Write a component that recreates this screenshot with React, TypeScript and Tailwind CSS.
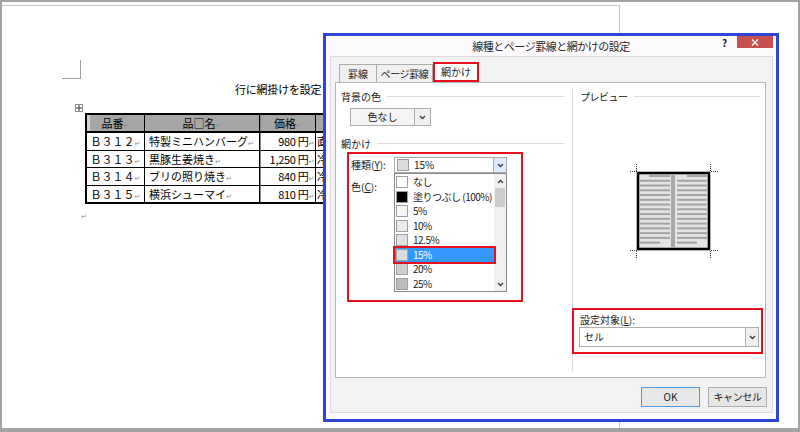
import React from 'react'

const shades = [
  { label: 'なし', swatch: 'bg-white' },
  { label: '塗りつぶし (100%)', swatch: 'bg-black' },
  { label: '5%', swatch: 'bg-[#f7f6f7]' },
  { label: '10%', swatch: 'bg-[#ebebeb]' },
  { label: '12.5%', swatch: 'bg-[#e2e2e2]' },
  { label: '15%', swatch: 'bg-[#dcdcdc]', selected: true },
  { label: '20%', swatch: 'bg-[#cfcfcf]' },
  { label: '25%', swatch: 'bg-[#bcbcbc]' },
]

const items = [
  { no: 'Ｂ３１２', name: '特製ミニハンバーグ', price: '980 円', kind: '直', h: 'h-[17px]' },
  { no: 'Ｂ３１３', name: '黒豚生姜焼き', price: '1,250 円', kind: '冷', h: 'h-[16px]' },
  { no: 'Ｂ３１４', name: 'ブリの照り焼き', price: '840 円', kind: '冷', h: 'h-[17px]' },
  { no: 'Ｂ３１５', name: '横浜シューマイ', price: '810 円', kind: '冷', h: 'h-[16px]' },
]

const previewRows = Array.from({ length: 15 }, (_, i) => 14 + i * 4.76)

function Chevron({ up = false }: { up?: boolean }) {
  return (
    <svg width="7" height="5" viewBox="0 0 7 5">
      <path d={up ? 'M1 4l2.5-2.5L6 4' : 'M1 1l2.5 2.5L6 1'} fill="none" stroke="#3a3a3a" strokeWidth="1.3" />
    </svg>
  )
}

function Mark() {
  return <span className="font-['DejaVu_Sans',sans-serif] text-[7px] text-[#8a8a8a]">↵</span>
}

function GroupLabel({ text, className = '' }: { text: string; className?: string }) {
  return (
    <div className={`flex items-center ${className}`}>
      <span className="whitespace-nowrap">{text}</span>
      <div className="ml-[6px] h-px flex-1 bg-[#dcdcdc]" />
    </div>
  )
}

function Preview() {
  return (
    <svg width="88" height="97" viewBox="0 0 88 97">
      <rect x="8" y="12" width="71" height="76" fill="#e4e4e4" stroke="#000" strokeWidth="2.6" />
      <rect x="41" y="13" width="4" height="74" fill="#a9a9a9" />
      {previewRows.map((y, i) => (
        <g key={i} fill="#a4a4a4">
          <rect x={i === 0 ? 19 : 10} y={y} width={i === 0 ? 21 : i === 14 ? 20 : 30} height="2" />
          <rect x={i === 0 ? 57 : 47} y={y} width={i === 0 ? 20 : i === 14 ? 20 : 30} height="2" />
        </g>
      ))}
      <g stroke="#333" strokeWidth="1" strokeDasharray="1 1" fill="none">
        <path d="M6.5 3v7M0 10.5h7" />
        <path d="M80.5 3v7M81 10.5h7" />
        <path d="M6.5 90v7M0 89.5h7" />
        <path d="M80.5 90v7M81 89.5h7" />
      </g>
    </svg>
  )
}

export default function App() {
  return (
    <div className="relative h-[432px] w-[800px] overflow-hidden border-t-2 border-l-2 border-r-2 border-b-4 border-[#a3a3a3] bg-white font-['Noto_Sans_CJK_JP',sans-serif] text-[#1a1a1a]">
      {/* document page */}
      <div className="pt-[3px]">
        <div className="h-[423px] w-[618px] border-t border-r border-[#c8c8c8]">
          <div className="ml-[60px] mt-[54px] h-[19px] w-[19px] border-r border-b border-[#a0a0a0]" />
          <div className="ml-[233px] mt-[2px] h-[16px] whitespace-nowrap text-[11px] leading-[16px] tracking-[-0.2px] text-black">
            行に網掛けを設定し
          </div>

          <div className="relative ml-[83px] mt-[16px] w-[243px]">
            <div className="absolute -left-[10px] -top-[9px] flex h-[8px] w-[8px] items-center justify-center border border-[#8c8c8c] bg-white">
              <svg width="6" height="6" viewBox="0 0 6 6">
                <path d="M3 0v6M0 3h6" stroke="#333" strokeWidth="1" />
              </svg>
            </div>
            <div className="border-2 border-black text-[11px] text-black">
              <div className="flex h-[18px] border-b-2 border-black bg-[#a6a6a6] leading-[16px]">
                <div className="w-[58px] border-r border-black text-center shadow-[inset_3px_0_0_#d3d3d3]">
                  品番<Mark />
                </div>
                <div className="w-[115px] border-r border-black text-center">
                  品□名<Mark />
                </div>
                <div className="w-[56px] border-r border-l border-r-black border-l-[#8a8a8a] text-center">
                  価格<Mark />
                </div>
                <div className="w-[10px]" />
              </div>
              {items.map((r, i) => (
                <div
                  key={r.no}
                  className={`flex ${r.h} ${i < items.length - 1 ? 'border-b border-black' : ''} box-content leading-[16px]`}
                >
                  <div className="w-[58px] border-r border-black text-center">
                    {r.no}
                    <Mark />
                  </div>
                  <div className="w-[115px] whitespace-nowrap border-r border-black pl-[4px]">
                    {r.name}
                    <Mark />
                  </div>
                  <div className="w-[56px] whitespace-nowrap border-r border-l border-r-black border-l-[#8a8a8a] pr-[1px] text-right tracking-[-0.3px]">
                    {r.price}
                    <Mark />
                  </div>
                  <div className="w-[10px] whitespace-nowrap pl-[1px]">{r.kind}</div>
                </div>
              ))}
            </div>
          </div>
          <div className="ml-[79px] mt-[3px] leading-[10px]">
            <Mark />
          </div>
        </div>
      </div>

      {/* dialog */}
      <div className="absolute left-[321px] top-[31px] h-[389px] w-[456px] border-[3px] border-[#2f45d6] bg-[#fcfafc] text-[10px]">
        <div className="relative h-[20px] text-center text-[11px] leading-[20px] tracking-[-0.5px] text-[#2a2a2a]">
          線種とページ罫線と網かけの設定
          <span className="absolute left-[396px] top-[1px] text-[10px] font-bold leading-[12px] text-[#222]">?</span>
          <div className="absolute left-[411px] top-0 flex h-[12px] w-[36px] items-center justify-center bg-[#c75050]">
            <svg width="8" height="7" viewBox="0 0 8 7">
              <path d="M1 0.5l6 6M7 0.5l-6 6" stroke="#fff" strokeWidth="1.3" />
            </svg>
          </div>
        </div>

        <div className="ml-[4px] mr-[3px] h-[357px] border border-[#dcdadc] bg-[#f5f2f5]">
          {/* tabs */}
          <div className="ml-[8px] mt-[5px] flex h-[20px] items-end">
            <div className="h-[18px] w-[38px] border border-b-0 border-[#acacac] bg-[#f0f0f0] text-center leading-[17px]">罫線</div>
            <div className="h-[18px] w-[56px] border-t border-r border-[#acacac] bg-[#f0f0f0] text-center leading-[17px] tracking-[-0.4px]">
              ページ罫線
            </div>
            <div className="relative z-10 h-[20px] w-[46px] border-2 border-[#e5101b] bg-white text-center leading-[16px]">網かけ</div>
          </div>

          {/* panel */}
          <div className="ml-[4px] flex h-[296px] w-[431px] border border-[#b6b6b6] bg-white">
            <div className="w-[236px]">
              <GroupLabel text="背景の色" className="mt-[6px] h-[14px] pl-[5px] pr-[8px]" />
              <div className="ml-[14px] mt-[5px] flex h-[18px]">
                <div className="w-[65px] border border-[#adadad] bg-[#f4f4f4] text-center leading-[16px]">色なし</div>
                <div className="flex w-[16px] items-center justify-center border border-l-0 border-[#adadad] bg-[#f0f0f0]">
                  <Chevron />
                </div>
              </div>
              <GroupLabel text="網かけ" className="mt-[10px] h-[14px] pl-[5px] pr-[8px]" />

              <div className="relative ml-[11px] mt-[2px] h-[150px] w-[176px] border-2 border-[#e5101b]">
                <div className="mt-[3px] flex h-[16px] items-center">
                  <span className="w-[45px] pl-[2px] leading-[14px]">
                    種類(<span className="underline">Y</span>):
                  </span>
                  <div className="flex h-[16px] w-[113px] border border-[#a9a9a9] bg-white">
                    <div className="ml-[2px] mt-[1px] h-[12px] w-[12px] border border-[#9a9a9a] bg-[#dcdcdc]" />
                    <span className="ml-[5px] flex-1 leading-[14px]">15%</span>
                    <div className="flex w-[13px] items-center justify-center border-l border-[#7eb4ea] bg-[#dcecfc]">
                      <Chevron />
                    </div>
                  </div>
                </div>
                <div className="mt-[7px] h-[14px] pl-[2px] leading-[14px]">
                  色(<span className="underline">C</span>):
                </div>

                <div className="absolute left-[45px] top-[19px] flex w-[113px] border border-[#8a8a8a] bg-white">
                  <div className="w-[99px] pt-[1px]">
                    {shades.map((s) => (
                      <div
                        key={s.label}
                        className={`flex h-[14.5px] items-center whitespace-nowrap ${
                          s.selected ? 'relative z-10 bg-[#3399ff] text-white outline-2 outline-solid outline-[#e5101b]' : ''
                        }`}
                      >
                        <div className={`ml-[1px] h-[12px] w-[12px] shrink-0 border border-[#a0a0a0] ${s.swatch}`} />
                        <span className="ml-[5px] leading-[14px] tracking-[-0.5px]">{s.label}</span>
                      </div>
                    ))}
                  </div>
                  <div className="flex w-[12px] flex-col items-center bg-[#f0f0f0]">
                    <div className="flex h-[14px] items-center">
                      <Chevron up />
                    </div>
                    <div className="h-[19px] w-[10px] bg-[#cdcdcd]" />
                    <div className="flex-1" />
                    <div className="flex h-[14px] items-center">
                      <Chevron />
                    </div>
                  </div>
                </div>
              </div>
            </div>

            <div className="mt-[6px] h-[282px] flex-1 border-l border-[#dcdcdc]">
              <GroupLabel text="プレビュー" className="h-[14px] pl-[7px] pr-[5px] tracking-[-0.5px]" />
              <div className="ml-[57px] mt-[58px]">
                <Preview />
              </div>
              <div className="-ml-[1px] mt-[50px] h-[46px] w-[191px] border-2 border-[#e5101b]">
                <div className="mt-[3px] h-[14px] pl-[6px] leading-[14px]">
                  設定対象(<span className="underline">L</span>):
                </div>
                <div className="ml-[5px] flex h-[20px] w-[180px] border border-[#adadad] bg-white">
                  <span className="flex-1 pl-[4px] leading-[18px]">セル</span>
                  <div className="flex w-[13px] items-center justify-center border-l border-[#adadad] bg-[#f0f0f0]">
                    <Chevron />
                  </div>
                </div>
              </div>
            </div>
          </div>

          {/* buttons */}
          <div className="mt-[9px] flex justify-end gap-[8px] pr-[5px]">
            <div className="h-[20px] w-[59px] border border-[#4a9be6] bg-[#e8e8e8] text-center leading-[18px]">OK</div>
            <div className="h-[20px] w-[59px] border border-[#acacac] bg-[#e6e6e6] text-center leading-[18px] tracking-[-0.4px]">
              キャンセル
            </div>
          </div>
        </div>
      </div>
    </div>
  )
}
